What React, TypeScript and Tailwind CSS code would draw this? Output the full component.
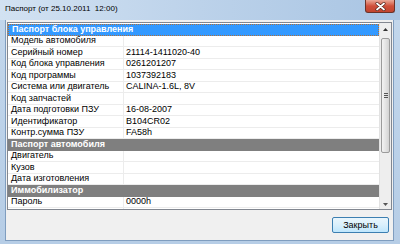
import React from 'react';

type Row =
  | { kind: 'head'; text: string; active?: boolean }
  | { kind: 'item'; label: string; value?: string };

const rows: Row[] = [
  { kind: 'head', text: 'Паспорт блока управления', active: true },
  { kind: 'item', label: 'Модель автомобиля' },
  { kind: 'item', label: 'Серийный номер', value: '21114-1411020-40' },
  { kind: 'item', label: 'Код блока управления', value: '0261201207' },
  { kind: 'item', label: 'Код программы', value: '1037392183' },
  { kind: 'item', label: 'Система или двигатель', value: 'CALINA-1.6L, 8V' },
  { kind: 'item', label: 'Код запчастей' },
  { kind: 'item', label: 'Дата подготовки ПЗУ', value: '16-08-2007' },
  { kind: 'item', label: 'Идентификатор', value: 'B104CR02' },
  { kind: 'item', label: 'Контр.сумма ПЗУ', value: 'FA58h' },
  { kind: 'head', text: 'Паспорт автомобиля' },
  { kind: 'item', label: 'Двигатель' },
  { kind: 'item', label: 'Кузов' },
  { kind: 'item', label: 'Дата изготовления' },
  { kind: 'head', text: 'Иммобилизатор' },
  { kind: 'item', label: 'Пароль', value: '0000h' },
  { kind: 'item', label: 'ОЕМ обучение', value: 'Нет' },
];

const GridRow: React.FC<{ row: Row }> = ({ row }) => {
  if (row.kind === 'head') {
    return (
      <div
        className={`h-[11.5px] shrink-0 flex items-center pl-[3px] font-bold text-white leading-none ${
          row.active ? 'bg-[#3399ff] border border-dotted border-[#b0703a]' : 'bg-[#7f7f7f]'
        }`}
      >
        {row.text}
      </div>
    );
  }
  return (
    <div className="h-[11.5px] shrink-0 flex border-b border-[#ececec] leading-none">
      <div className="w-[116px] shrink-0 flex items-center pl-[3px] border-r border-[#ececec]">{row.label}</div>
      <div className="flex-1 flex items-center pl-[2px]">{row.value}</div>
    </div>
  );
};

const ScrollBar: React.FC = () => (
  <div className="w-[12px] shrink-0 flex flex-col bg-[#eeeeee] border-l border-[#e2e2e2]">
    <div className="h-[13px] flex items-center justify-center">
      <svg width="5" height="3" viewBox="0 0 5 3">
        <path d="M0 3 L2.5 0 L5 3 Z" fill="#333" />
      </svg>
    </div>
    <div className="mt-[2px] mx-[1px] h-[115px] rounded-[2px] border border-[#9b9b9b] bg-gradient-to-r from-[#f3f3f3] via-[#e4e4e4] to-[#d3d3d3] flex flex-col items-center justify-center gap-[1px]">
      <div className="w-[4px] h-px bg-[#555]" />
      <div className="w-[4px] h-px bg-[#555]" />
      <div className="w-[4px] h-px bg-[#555]" />
    </div>
    <div className="flex-1" />
    <div className="h-[10px] flex items-center justify-center">
      <svg width="5" height="3" viewBox="0 0 5 3">
        <path d="M0 0 L2.5 3 L5 0 Z" fill="#555" />
      </svg>
    </div>
  </div>
);

export default function App() {
  return (
    <div
      className="w-[400px] h-[244px] flex flex-col bg-gradient-to-b from-[#c3d7ec] to-[#b6cde6] overflow-hidden"
      style={{ fontFamily: '"Liberation Sans", Arial, sans-serif' }}
    >
      {/* title bar */}
      <div className="h-[20px] shrink-0 flex items-start bg-gradient-to-r from-[#d2e2f2] via-[#bcd2ea] to-[#a9c5e3]">
        <div className="flex-1 pl-[5px] pt-[5px] text-[8px] leading-none text-black">
          Паспорт (от 25.10.2011&nbsp; 12:00)
        </div>
        <div className="mr-[5px] w-[30px] h-[13px] rounded-b-[3px] border border-t-0 border-[#6b3329] bg-gradient-to-b from-[#e9a898] via-[#cf4f3b] to-[#c2452f] flex items-center justify-center">
          <svg width="11" height="9" viewBox="0 0 11 9">
            <path d="M2 1.5 L9 7.5 M9 1.5 L2 7.5" stroke="#4a1d16" strokeWidth="3" strokeLinecap="round" />
            <path d="M2 1.5 L9 7.5 M9 1.5 L2 7.5" stroke="#ffffff" strokeWidth="1.8" strokeLinecap="round" />
          </svg>
        </div>
      </div>

      {/* client area */}
      <div className="flex-1 mx-[5px] mr-[6px] mb-[3px] flex flex-col bg-[#f0f0f0] border border-t-0 border-[#7f9dbf]">
        <div className="mt-[2px] ml-[1px] mr-[1px] h-[188px] flex border border-[#828790] bg-white text-[9px] text-black overflow-hidden">
          <div className="flex-1 flex flex-col pt-[1px] pl-[0px] overflow-hidden">
            {rows.map((r, i) => (
              <GridRow key={i} row={r} />
            ))}
          </div>
          <ScrollBar />
        </div>
        <div className="flex justify-end mt-[7px] mr-[4px]">
          <button className="w-[57px] h-[16px] rounded-[2px] border border-[#3c7fb1] bg-gradient-to-b from-[#eaf6fd] via-[#d9f0fc] to-[#bee6fd] text-[9px] leading-none text-black">
            Закрыть
          </button>
        </div>
      </div>
    </div>
  );
}
